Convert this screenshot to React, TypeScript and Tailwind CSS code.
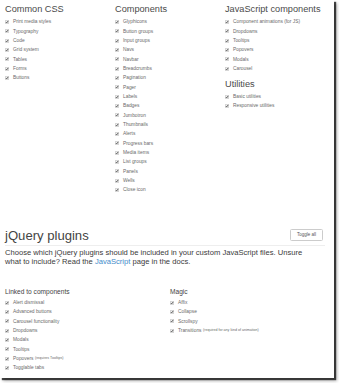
import React from 'react';

const commonCss = ['Print media styles', 'Typography', 'Code', 'Grid system', 'Tables', 'Forms', 'Buttons'];

const components = [
  'Glyphicons', 'Button groups', 'Input groups', 'Navs', 'Navbar', 'Breadcrumbs', 'Pagination', 'Pager',
  'Labels', 'Badges', 'Jumbotron', 'Thumbnails', 'Alerts', 'Progress bars', 'Media items', 'List groups',
  'Panels', 'Wells', 'Close icon',
];

const jsComponents = ['Component animations (for JS)', 'Dropdowns', 'Tooltips', 'Popovers', 'Modals', 'Carousel'];

const utilities = ['Basic utilities', 'Responsive utilities'];

const linked: [string, string?][] = [
  ['Alert dismissal'],
  ['Advanced buttons'],
  ['Carousel functionality'],
  ['Dropdowns'],
  ['Modals'],
  ['Tooltips'],
  ['Popovers', '(requires Tooltips)'],
  ['Togglable tabs'],
];

const magic: [string, string?][] = [
  ['Affix'],
  ['Collapse'],
  ['Scrollspy'],
  ['Transitions', '(required for any kind of animation)'],
];

// tiny checked checkbox
const Check = () => (
  <svg width="4" height="4" viewBox="0 0 8 8" className="shrink-0 mr-[4px]">
    <rect x="0.5" y="0.5" width="7" height="7" rx="1" fill="#f3f3f3" stroke="#a5a5a5" />
    <path d="M1.8 4.2 L3.4 5.8 L6.4 1.8" fill="none" stroke="#333" strokeWidth="1.5" />
  </svg>
);

const Item = ({ label, note }: { label: string; note?: string }) => (
  <div className="flex items-center h-[9.33px] leading-[9.33px] text-[4.85px] text-[#6a6a6a] whitespace-nowrap">
    <Check />
    <span>{label}</span>
    {note && <span className="ml-[1.5px] text-[3.6px]">{note}</span>}
  </div>
);

const H3 = ({ children, className = '' }: { children: React.ReactNode; className?: string }) => (
  <h3 className={`text-[9.2px] leading-[11px] text-[#4a4a4a] font-normal mb-[2.3px] ${className}`}>{children}</h3>
);

export default function App() {
  return (
    <div className="w-[339px] h-[383px] bg-white overflow-hidden" style={{ fontFamily: '"Liberation Sans", Arial, sans-serif' }}>
      <div className="w-[334px] h-[378px] bg-white shadow-[2px_2px_1px_rgba(0,0,0,0.7),3px_3px_3px_rgba(0,0,0,0.3)]">
        {/* top customize groups */}
        <div className="grid grid-cols-[110px_110px_110px] pl-[5px] pt-[4px]">
          <div>
            <H3>Common CSS</H3>
            {commonCss.map(l => <Item key={l} label={l} />)}
          </div>
          <div>
            <H3>Components</H3>
            {components.map(l => <Item key={l} label={l} />)}
          </div>
          <div>
            <H3>JavaScript components</H3>
            {jsComponents.map(l => <Item key={l} label={l} />)}
            <H3 className="mt-[5.5px]">Utilities</H3>
            {utilities.map(l => <Item key={l} label={l} />)}
          </div>
        </div>

        {/* jQuery plugins */}
        <div className="mx-[5px] w-[320px] mt-[33.3px]">
          <div className="flex items-center justify-between border-b border-[#eee] pb-[2.5px]">
            <h1 className="text-[13.1px] leading-[15px] text-[#444] font-normal">jQuery plugins</h1>
            <button className="mr-[2px] w-[33px] h-[12px] border border-[#ccc] rounded-[1.5px] bg-white text-[4.5px] text-[#555] leading-none">
              Toggle all
            </button>
          </div>
          <p className="mt-[3px] text-[7.6px] leading-[8.9px] text-[#3a3a3a] w-[312px]">
            Choose which jQuery plugins should be included in your custom JavaScript files. Unsure what to include? Read the{' '}
            <span className="text-[#428bca]">JavaScript</span> page in the docs.
          </p>
          <div className="grid grid-cols-[165px_155px] mt-[20px]">
            <div>
              <h4 className="text-[6.6px] leading-[9px] text-[#444] mb-[1.8px]">Linked to components</h4>
              {linked.map(([l, n]) => <Item key={l} label={l} note={n} />)}
            </div>
            <div>
              <h4 className="text-[6.6px] leading-[9px] text-[#444] mb-[1.8px]">Magic</h4>
              {magic.map(([l, n]) => <Item key={l} label={l} note={n} />)}
            </div>
          </div>
        </div>
      </div>
    </div>
  );
}
